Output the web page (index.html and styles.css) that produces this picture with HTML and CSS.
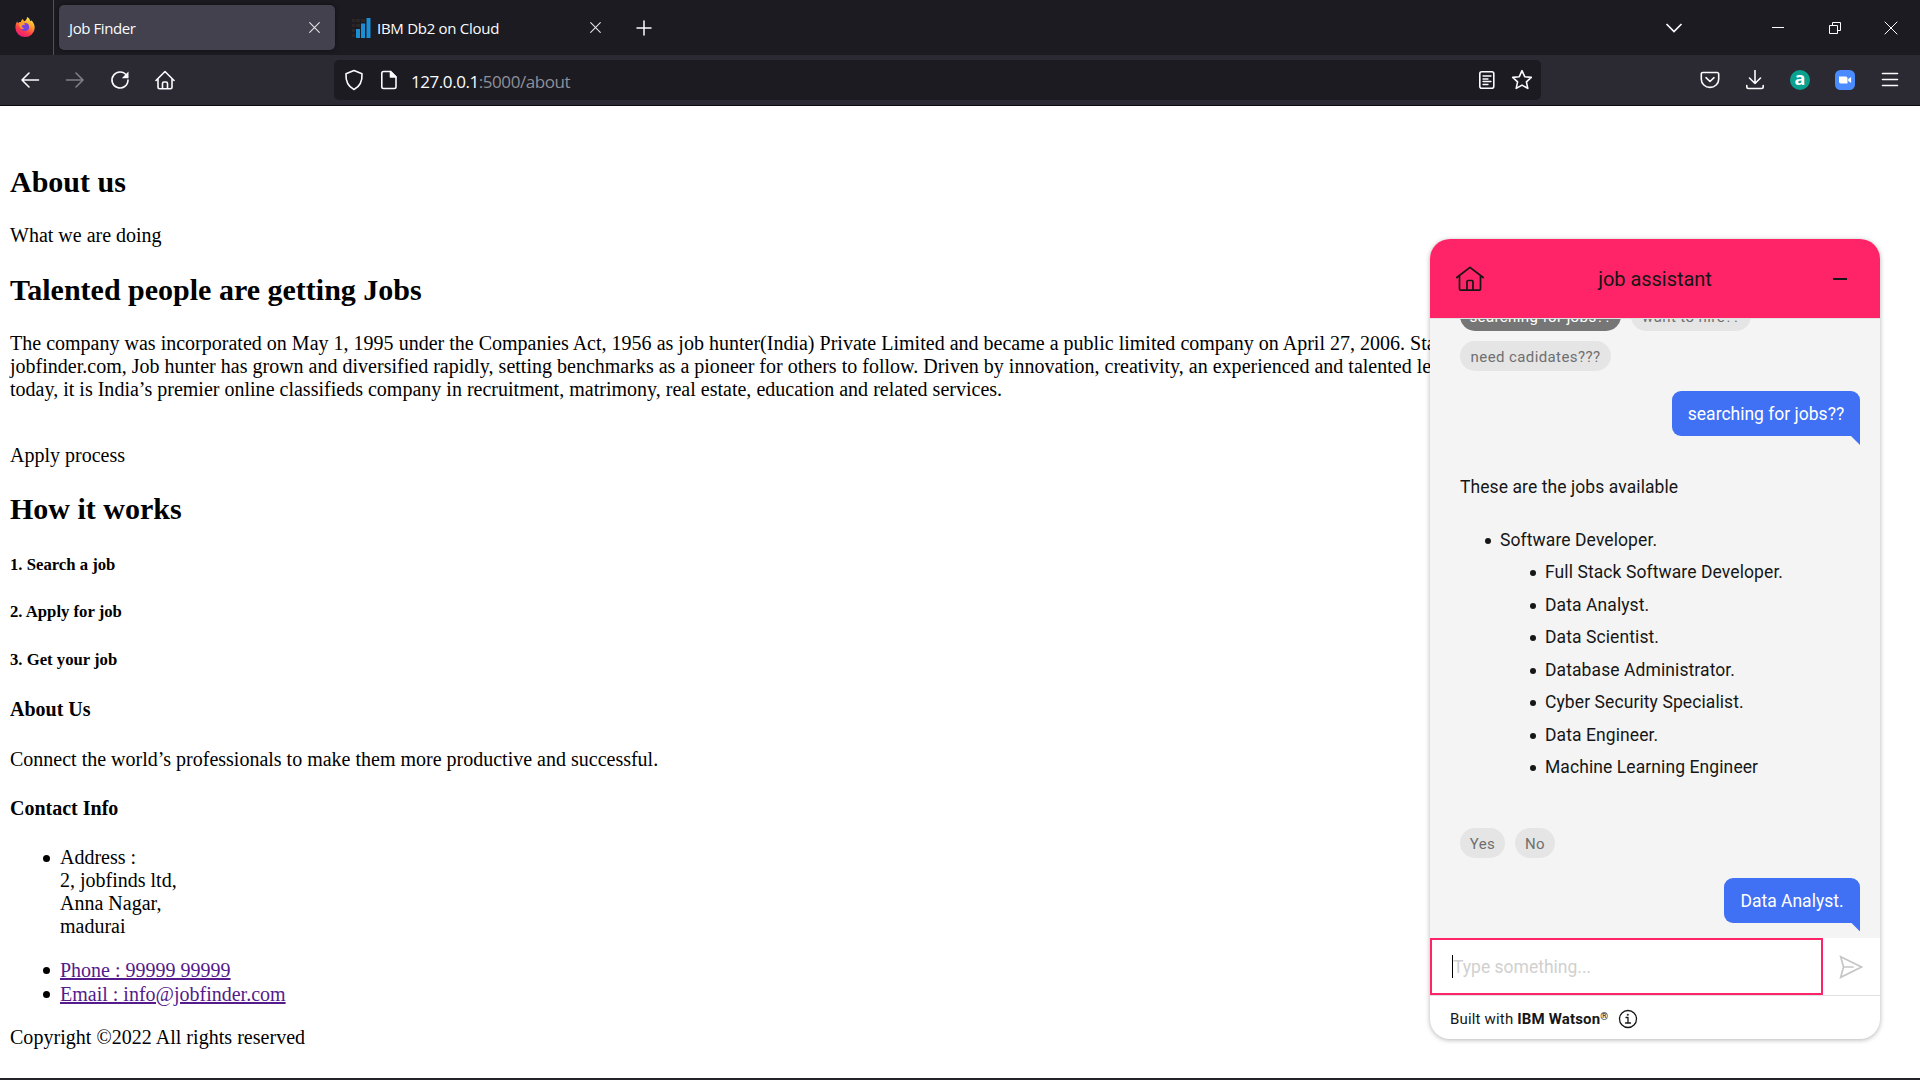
FILE: index.html
```html
<!DOCTYPE html>
<html lang="en">
<head>
<meta charset="utf-8">
<title>Job Finder</title>
<link rel="stylesheet" href="styles.css">
</head>
<body>
<div class="browser">
  <header class="tabbar">
    <div class="brand">
      <svg width="20" height="20" viewBox="0 0 20 20">
        <defs>
          <linearGradient id="fire" x1="0.8" y1="0" x2="0.3" y2="1"><stop offset="0" stop-color="#fff44f"/><stop offset=".35" stop-color="#ffa52c"/><stop offset=".7" stop-color="#ff3c4a"/><stop offset="1" stop-color="#e9197f"/></linearGradient>
        </defs>
        <path fill="url(#fire)" d="M12 0c2 1 3 2.600 3.300 4.200 1-.2 1.200-.9 1.200-.9 2 2.200 3.300 4.600 3.200 7.700A9.700 9.200 0 0 1 10 20 9.600 9.200 0 0 1 .4 11C.3 7.500 1.500 5.500 2.400 4.600l.5 1.600c.8-.8 1.800-1.300 3-1.200C6 3.500 7 2.500 8 2c0 1 .5 1.700 1.500 2.300C11 3.500 12 2 12 0z"/>
        <circle cx="10" cy="10" r="4.100" fill="#7542e5"/>
        <path fill="#ff9a2a" d="M4 6c2.500-1 5-.4 6.300 1.200-1 .9-2.600.6-3.300 1.400-.9 1 .4 2.700 2.600 2.700C7 13.200 4 11.200 4 6z"/>
      </svg>
    </div>
    <div class="tab active"><span class="tab-title">Job Finder</span>
      <svg class="x" width="11" height="11" viewBox="0 0 11 11"><path d="M.7.7l9.600 9.600M10.300.7L.7 10.300"/></svg>
    </div>
    <div class="tab">
      <svg class="db" width="20" height="20" viewBox="0 0 20 20"><g fill="#2b2625"><path d="M1 1h3v3H1zM5 1h4v3H5zM10 1h4v3h-4zM1 6h3v3H1zM5 6h4v3H5zM1 11h3v3H1zM1 16h3v3H1z"/></g><path fill="#1b8fd6" d="M5 11h4v9H5zM10 5.500h4V20h-4zM15.500 0h4v20h-4z"/></svg>
      <span class="tab-title db-title">IBM Db2 on Cloud</span>
      <svg class="x" width="11" height="11" viewBox="0 0 11 11"><path d="M.7.7l9.600 9.600M10.300.7L.7 10.300"/></svg>
    </div>
    <svg class="plus" width="16" height="16" viewBox="0 0 16 16"><path d="M8 1v14M1 8h14"/></svg>
    <div class="window-controls">
      <svg width="18" height="12" viewBox="0 0 18 12"><path stroke-width="1.700" d="M1.500 2L9 9.500 16.500 2"/></svg>
      <svg width="12" height="12" viewBox="0 0 12 12"><path d="M0 5.500h12"/></svg>
      <svg width="12" height="12" viewBox="0 0 12 12"><path d="M.5 3.500h8v8h-8zM3.500 3.500v-3h8v8h-3"/></svg>
      <svg width="14" height="14" viewBox="0 0 14 14"><path d="M.7.7l12.600 12.600M13.300.7L.7 13.300"/></svg>
    </div>
  </header>
  <div class="toolbar">
    <nav class="nav">
      <svg width="20" height="20" viewBox="0 0 20 20"><path d="M18.500 10H2M9 3l-7 7 7 7"/></svg>
      <svg class="dim" width="20" height="20" viewBox="0 0 20 20"><path d="M1.500 10H18M11 3l7 7-7 7"/></svg>
      <svg width="20" height="20" viewBox="0 0 20 20"><path d="M16.600 5.500A8 8 0 1 0 18 10"/><path fill="#fbfbfe" stroke="none" d="M18.500 1.500v6.700h-6.700z"/></svg>
      <svg width="20" height="20" viewBox="0 0 20 20"><path d="M1 10.500L10 1.500l9 9M3 9v8q0 1.700 1.700 1.700h10.600q1.700 0 1.700-1.700V9M7.500 18.500v-5q0-1.500 1.500-1.500h2q1.500 0 1.500 1.500v5"/></svg>
    </nav>
    <div class="urlbar">
      <svg width="20" height="22" viewBox="0 0 20 22"><path d="M10 1.500l8 3.300c.4 6.500-1.500 12.500-8 15.700C3.500 17.300 1.600 11.300 2 4.800z"/></svg>
      <svg class="page" width="18" height="20" viewBox="0 0 18 20"><path d="M3.500 1.500h7l5.500 5.500v9.800q0 1.700-1.700 1.700H3.500q-1.700 0-1.700-1.700V3.200q0-1.700 1.700-1.700z"/><path fill="#fbfbfe" d="M10.500 1.500V7H16z"/></svg>
      <span class="url"><b>127.0.0.1</b>:5000/about</span>
      <svg class="reader" width="18" height="20" viewBox="0 0 18 20"><rect x="1.800" y="1.800" width="14" height="16.400" rx="2"/><path d="M5 6h8M5 9h5M5 11.500h8M5 14.500h5" stroke-width="1.300"/></svg>
      <svg width="22" height="22" viewBox="0 0 22 22"><path d="M11 1.700l2.700 6 6.600.7-4.900 4.500 1.400 6.500L11 16.100l-5.800 3.300 1.400-6.500-4.900-4.500 6.600-.7z"/></svg>
    </div>
    <div class="tools">
      <svg width="20" height="20" viewBox="0 0 20 20"><path d="M3 2.500h14q1.700 0 1.700 1.700v5a8.700 8.200 0 0 1-17.400 0v-5Q1.300 2.500 3 2.500zM6 7.700l4 3.800 4-3.800"/></svg>
      <svg width="20" height="20" viewBox="0 0 20 20"><path d="M10 .5v13M4.500 8l5.500 5.500L15.500 8M1.800 15.500v1.300q0 1.700 1.700 1.700h13q1.700 0 1.700-1.700v-1.300"/></svg>
      <span class="ext-a">a</span>
      <svg width="20" height="20" viewBox="0 0 20 20"><rect width="20" height="20" rx="5.500" fill="#4a8cff" stroke="none"/><path fill="#fff" stroke="none" d="M4 6.500h6.700q1.800 0 1.800 1.800v5.200H5.800Q4 13.500 4 11.700zM13.200 9l2.900-2v6l-2.900-2z"/></svg>
      <svg width="20" height="20" viewBox="0 0 20 20"><path d="M2.500 3.500h15M2.500 9.500h15M2.500 15.500h15"/></svg>
    </div>
  </div>
  <main class="page-body">
    <h2>About us</h2>
    <p>What we are doing</p>
    <h2>Talented people are getting Jobs</h2>
    <p class="about">The company was incorporated on May 1, 1995 under the Companies Act, 1956 as job hunter(India) Private Limited and became a public limited company on April 27, 2006. Sta<br>jobfinder.com, Job hunter has grown and diversified rapidly, setting benchmarks as a pioneer for others to follow. Driven by innovation, creativity, an experienced and talented le<br>today, it is India’s premier online classifieds company in recruitment, matrimony, real estate, education and related services.</p>
    <p class="apply">Apply process</p>
    <h2>How it works</h2>
    <h5>1. Search a job</h5>
    <h5>2. Apply for job</h5>
    <h5>3. Get your job</h5>
    <h4>About Us</h4>
    <p>Connect the world’s professionals to make them more productive and successful.</p>
    <h4>Contact Info</h4>
    <ul class="contact">
      <li><p>Address :<br>2, jobfinds ltd,<br>Anna Nagar,<br>madurai</p></li>
      <li><a>Phone : 99999 99999</a></li>
      <li><a>Email : info@jobfinder.com</a></li>
    </ul>
    <p class="copy">Copyright ©2022 All rights reserved</p>
  </main>
</div>
<aside class="chat">
  <div class="chat-head">
    <svg width="28" height="26" viewBox="0 0 28 26"><path d="M.8 11.500L14 1.300l13.200 10.200M3.500 9.500V23q0 1.200 1.200 1.200h18.600q1.200 0 1.200-1.200V9.500M11 24v-8.500q0-1 1-1h4q1 0 1 1V24"/></svg>
    <span class="chat-title">job assistant</span>
    <span class="minimize"></span>
  </div>
  <div class="messages">
    <div class="chips first">
      <span class="chip picked">searching for jobs??</span><span class="chip hire">want to hire??</span><span class="chip need">need cadidates???</span>
    </div>
    <div class="bubble search">searching for jobs??</div>
    <p class="intro">These are the jobs available</p>
    <ul class="jobs">
      <li>Software Developer.
        <ul>
          <li>Full Stack Software Developer.</li>
          <li>Data Analyst.</li>
          <li>Data Scientist.</li>
          <li>Database Administrator.</li>
          <li>Cyber Security Specialist.</li>
          <li>Data Engineer.</li>
          <li>Machine Learning Engineer</li>
        </ul>
      </li>
    </ul>
    <div class="chips answers"><span class="chip yes">Yes</span><span class="chip no">No</span></div>
    <div class="bubble analyst">Data Analyst.</div>
  </div>
  <div class="compose">
    <div class="field"><span class="caret"></span><span class="hint">Type something...</span></div>
    <svg width="24" height="24" viewBox="0 0 24 24"><path d="M1.700 1.700L22.500 12 1.700 22.300 4.500 12zM4.500 12H14"/></svg>
  </div>
  <div class="built">
    <span class="by">Built with <b>IBM Watson<sup>®</sup></b></span>
    <svg width="20" height="20" viewBox="0 0 20 20"><circle cx="10" cy="10" r="8.500"/><path d="M8 8.500h2V14M7.500 14h5"/><circle cx="9.800" cy="5.700" r=".4"/></svg>
  </div>
</aside>
</body>
</html>
```
FILE: styles.css
```css
* { box-sizing: border-box; }
body { margin: 0; background: #fff; overflow: hidden; color: #000; }
svg { display: block; flex: none; fill: none; stroke: #fbfbfe; stroke-width: 1.6; stroke-linejoin: round; stroke-linecap: round; }

.browser { display: flex; flex-direction: column; height: 1080px; border-bottom: 2px solid #242328; }

.tabbar { display: flex; align-items: center; height: 55px; background: #1c1b22; color: #fbfbfe; font: 15px "Open Sans", sans-serif; }
.brand { width: 54px; height: 55px; padding: 17px 0 0 15px; border-right: 1px solid #515057; }
.brand svg { stroke: none; }
.tab { display: flex; align-items: center; width: 276px; height: 45px; margin-left: 5px; padding: 0 15px 0 10px; border-radius: 5px; }
.tab.active { background: #42414d; box-shadow: 0 0 4px rgba(0, 0, 0, .5); }
.tab-title { flex: 1; padding-top: 1px; letter-spacing: -.4px; white-space: nowrap; }
.db-title { letter-spacing: -.28px; }
.tab .x { stroke-width: 1.1; stroke: #e4e4e8; }
.db { margin: 0 6px 0 1px; stroke: none; }
.plus { margin-left: 20px; stroke-width: 1.5; }
.window-controls { display: flex; align-items: center; margin: 0 22px 0 auto; }
.window-controls svg { stroke-width: 1; stroke-linecap: butt; stroke-linejoin: miter; }
.window-controls svg:nth-child(2) { margin-left: 89px; }
.window-controls svg:nth-child(3) { margin-left: 45px; }
.window-controls svg:nth-child(4) { margin-left: 43px; }

.toolbar { display: flex; align-items: center; height: 51px; background: #2b2a33; border-bottom: 1px solid #0c0c0d; }
.nav { display: flex; gap: 25px; width: 334px; padding-left: 20px; }
.dim { opacity: .4; }
.urlbar { display: flex; align-items: center; width: 1207px; height: 40px; padding: 0 8px 0 10px; border-radius: 5px; background: #1c1b22; }
.page { margin-left: 16px; }
.url { margin-left: 13px; color: #8f8f98; font: 17px "Open Sans", sans-serif; letter-spacing: -.44px; padding-top: 2px; }
.url b { color: #fbfbfe; font-weight: 400; }
.reader { margin: 0 15px 0 auto; }
.tools { display: flex; align-items: center; gap: 25px; margin: 0 20px 0 auto; }
.ext-a { width: 20px; height: 20px; border-radius: 50%; background: #0aa18f; color: #fff; font: bold 18px/17px "Open Sans", sans-serif; text-align: center; }

.page-body { padding: 59px 10px 0; font: 20px/23px "Liberation Serif", "Times New Roman", serif; }
.page-body h2 { margin: 25px 0; font-size: 30px; line-height: 34px; }
.page-body h2:first-child { margin-top: 0; }
.page-body p { margin: 20px 0; white-space: nowrap; }
.page-body h2:first-child + p + h2 { margin-top: 26px; }
.page-body p.about { letter-spacing: .009px; }
.page-body p.apply { margin-top: 43px; }
.page-body h5 { margin: 28px 0; font-size: 16.7px; line-height: 19.3px; }
.page-body h2 + h5 { margin-top: 29px; }
.page-body h4 { margin: 27px 0; font-size: 20px; line-height: 23px; }
.page-body h5 + h4 { margin-top: 29px; }
.page-body p + h4 { margin-top: 26px; margin-bottom: 26px; }
.contact { margin: 26px 0 19px; padding-left: 50px; list-style: none; }
.contact li { line-height: 24px; }
.contact li p { margin: 0 0 20px; line-height: 23px; }
.contact a { color: #551a8b; text-decoration: underline; }
.contact li::before, .jobs li::before { content: ""; float: left; border-radius: 50%; background: currentColor; }
.contact li::before { width: 7px; height: 7px; margin: 9px -7px 0 0; transform: translateX(-17px); }
.page-body p.copy { letter-spacing: .03px; }

.chat { position: absolute; left: 1430px; top: 239px; display: flex; flex-direction: column; width: 450px; height: 800px; overflow: hidden; border-radius: 20px; background: #fff; color: #161616; font: 17.5px/22.5px Roboto, sans-serif; box-shadow: 0 1px 5px rgba(0, 0, 0, .3); }
.chat-head { display: flex; align-items: center; height: 80px; padding: 0 33px 0 26px; background: #ff2468; border-bottom: 1px solid #e0e0e0; }
.chat-head svg { stroke: #161616; stroke-width: 1.7; }
.chat-title { flex: 1; padding: 1px 7px 0 0; text-align: center; font-size: 20px; letter-spacing: -.05px; }
.minimize { width: 14px; height: 2px; background: #161616; }
.messages { height: 619px; padding: 0 20px 0 30px; overflow: hidden; background: #f4f4f4; }
.chips { display: flex; flex-wrap: wrap; gap: 10px; }
.chips.first { margin-top: -18px; }
.chip { height: 30px; border-radius: 15px; background: #e5e5e5; color: #6f6f6f; font-size: 15px; line-height: 32px; text-align: center; letter-spacing: .4px; }
.picked { width: 161px; background: #767676; color: #fff; }
.hire { width: 120px; }
.need { width: 151px; margin-right: 100px; }
.yes { width: 45px; }
.no { width: 40px; }
.bubble { position: relative; height: 45px; margin-left: auto; border-radius: 9px 9px 0 9px; background: #4070f4; color: #fff; line-height: 47px; text-align: center; }
.bubble::after { content: ""; position: absolute; right: 0; top: 44px; width: 10px; height: 10px; background: inherit; clip-path: polygon(0 0, 100% 0, 100% 100%); }
.search { width: 188px; margin-top: 20px; }
.analyst { width: 136px; margin-top: 20px; }
.intro { margin: 40px 0 0; letter-spacing: .08px; }
.jobs { margin: 25px 0 0; padding-left: 40px; line-height: 32.5px; list-style: none; letter-spacing: .09px; }
.jobs ul { padding-left: 45px; list-style: none; }
.jobs li::before { width: 6px; height: 6px; margin: 14px -6px 0 0; transform: translateX(-15px); }
.answers { margin-top: 44px; }
.compose { display: flex; align-items: center; height: 58px; border-bottom: 1px solid #e0e0e0; }
.compose svg { margin-left: 16px; stroke: #c6c6c6; stroke-width: 1.700; stroke-linejoin: miter; }
.field { display: flex; align-items: center; width: 393px; height: 57px; padding-left: 20px; border: 2px solid #ff2468; color: #d0d0d0; }
.caret { width: 1px; height: 23px; background: #000; }
.hint { padding-top: 1px; }
.built { display: flex; align-items: center; gap: 10px; height: 43px; padding: 2px 0 0 20px; font-size: 15px; letter-spacing: .17px; }
.by { padding-top: 1px; }
.built sup { font-size: 10px; line-height: 0; vertical-align: 4px; }
.built svg { stroke: #161616; stroke-width: 1.300; }
```
